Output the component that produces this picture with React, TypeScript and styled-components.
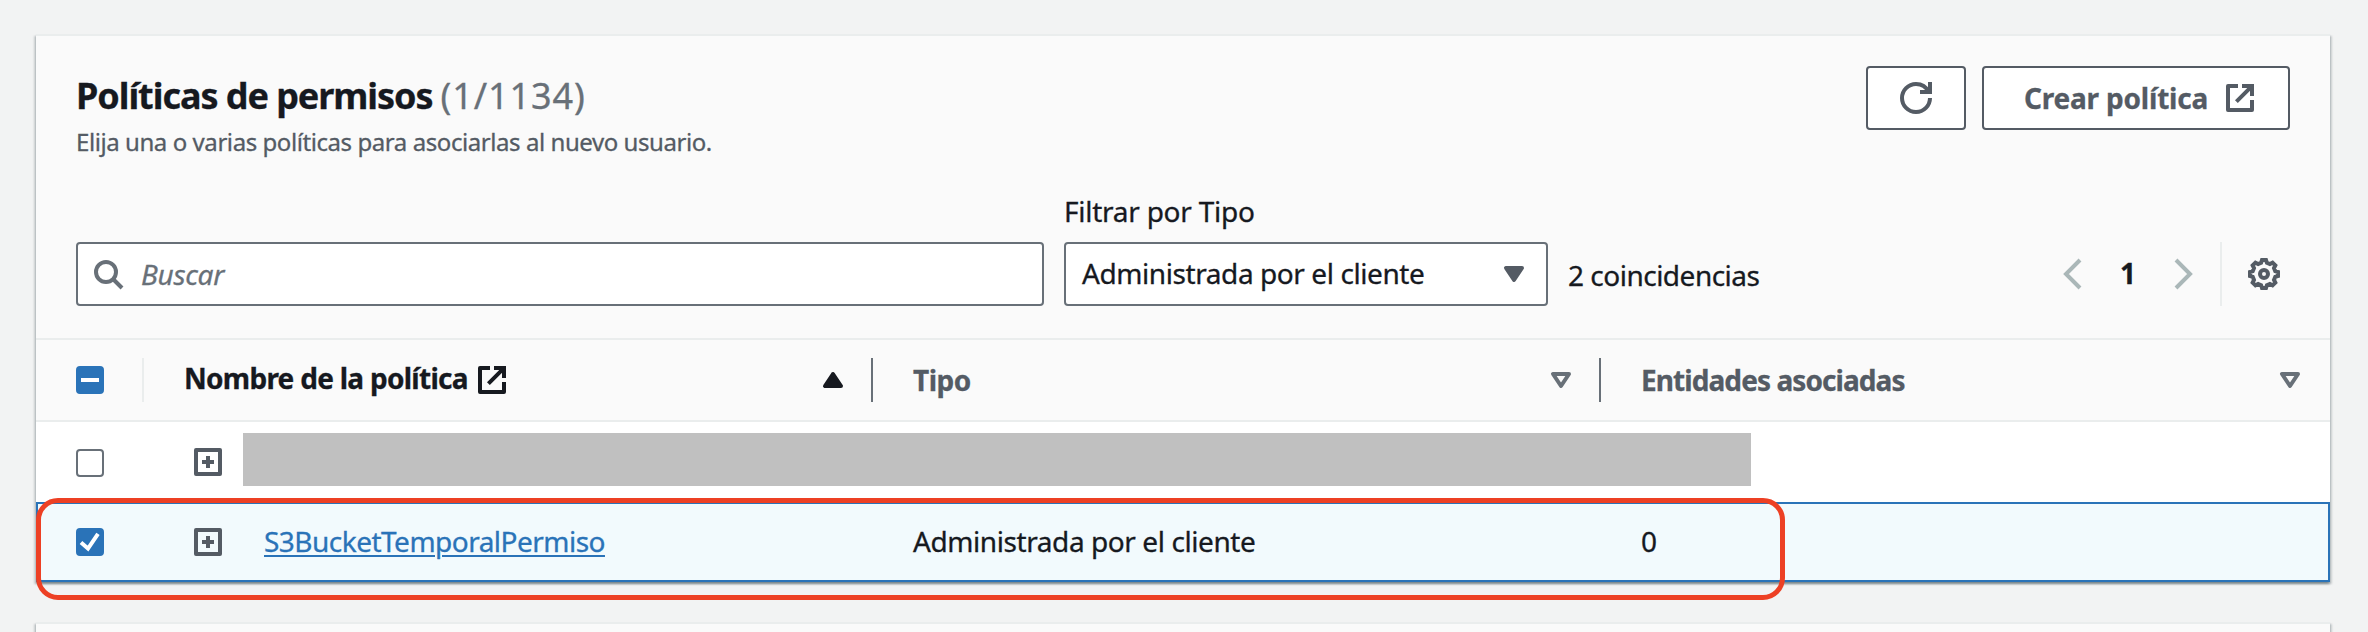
import React from 'react';
import styled, { createGlobalStyle } from 'styled-components';

const color = {
  page: '#f2f3f3',
  header: '#fafafa',
  line: '#eaeded',
  text: '#16191f',
  soft: '#545b64',
  border: '#687078',
  muted: '#aab7b8',
  blue: '#2a73b8',
  selected: '#f2fafd',
  red: '#ed4024',
};

const GlobalStyle = createGlobalStyle`
  * { box-sizing: border-box; }
  body {
    margin: 0;
    overflow: hidden;
    background: ${color.page};
    color: ${color.text};
    font: 28px/38px "Noto Sans", "Open Sans", sans-serif;
    -webkit-text-stroke: 0.3px currentColor;
  }
`;

const Page = styled.main`
  height: 632px;
  overflow: hidden;
  padding: 34px 38px 0 36px;
  display: flex;
  flex-direction: column;
  gap: 40px;
`;

const Panel = styled.section`
  position: relative;
  flex: none;
  border-top: 2px solid ${color.line};
  background: ${color.header};
  box-shadow:
    0 2px 2px 0 rgba(0, 28, 36, 0.3),
    2px 2px 2px 0 rgba(0, 28, 36, 0.15),
    -2px 2px 2px 0 rgba(0, 28, 36, 0.15);
`;

const NextPanel = styled(Panel)`
  height: 60px;
`;

const PanelHeader = styled.header`
  height: 302px;
  padding: 30px 40px 32px;
  display: flex;
  flex-direction: column;
  justify-content: space-between;
`;

const HeadingRow = styled.div`
  display: flex;
  justify-content: space-between;
  align-items: flex-start;
`;

const Heading = styled.div`
  padding-top: 8px;
`;

const Title = styled.h2`
  margin: 0 0 7px;
  display: flex;
  gap: 8px;
  font-size: 36px;
  line-height: 44px;
  letter-spacing: -1.06px;
  white-space: nowrap;
`;

const Counter = styled.span`
  font-weight: 400;
  letter-spacing: 0.9px;
  color: ${color.border};
`;

const Hint = styled.p`
  margin: 0;
  font-size: 24px;
  line-height: 33px;
  letter-spacing: -0.43px;
  color: ${color.soft};
  white-space: nowrap;
`;

const Actions = styled.div`
  display: flex;
  gap: 16px;
`;

const Button = styled.button<{ $width: number }>`
  width: ${(p) => p.$width}px;
  height: 64px;
  padding: 0 ${(p) => (p.$width > 100 ? '32px 0 40px' : '32px')};
  display: flex;
  align-items: center;
  justify-content: space-between;
  border: 2px solid ${color.soft};
  border-radius: 4px;
  background: #fff;
  color: ${color.soft};
  font: inherit;
  font-weight: 700;
`;

const Label = styled.span<{ $spacing?: number; $lift?: number }>`
  margin-bottom: ${(p) => p.$lift ?? 2}px;
  letter-spacing: ${(p) => p.$spacing ?? 0}px;
  white-space: nowrap;
`;

const Toolbar = styled.div`
  display: flex;
  align-items: flex-end;
`;

const Field = styled.div<{ $width: number }>`
  width: ${(p) => p.$width}px;
  height: 64px;
  padding: 0 16px 0 14px;
  display: flex;
  align-items: center;
  border: 2px solid ${color.border};
  border-radius: 4px;
  background: #fff;
`;

const SearchField = styled(Field)`
  gap: 17px;
  color: ${color.border};
  font-style: italic;
`;

const SelectField = styled(Field)`
  padding: 0 16px;
  justify-content: space-between;
`;

const Filter = styled.label`
  margin-left: 20px;
  display: flex;
  flex-direction: column;
`;

const FilterName = styled.span`
  margin: 0 0 13px;
  line-height: 36px;
  letter-spacing: -0.25px;
`;

const Matches = styled.span`
  margin-left: 20px;
  line-height: 64px;
  padding-top: 1px;
  height: 64px;
  letter-spacing: -0.5px;
`;

const Pagination = styled.nav`
  height: 64px;
  margin-left: auto;
  padding-right: 10px;
  display: flex;
  align-items: center;
`;

const PageNumber = styled.span`
  width: 76px;
  padding-bottom: 2px;
  text-align: center;
  font-weight: 700;
`;

const Separator = styled.span`
  width: 2px;
  height: 64px;
  margin: 0 26px 0 22px;
  background: ${color.line};
`;

const Row = styled.div`
  position: relative;
  height: 80px;
  display: grid;
  grid-template-columns: 108px 729px 728px 729px;
  background: #fff;
`;

const HeaderRow = styled(Row)`
  height: 84px;
  border-top: 2px solid ${color.line};
  border-bottom: 2px solid ${color.line};
  background: ${color.header};
  color: ${color.soft};
  font-weight: 700;
`;

const SelectedRow = styled(Row)`
  background: ${color.selected};
  box-shadow: inset 0 0 0 2px ${color.blue};
`;

const Cell = styled.div<{ $left?: number }>`
  padding-left: ${(p) => p.$left ?? 40}px;
  display: flex;
  align-items: center;
`;

const CheckCell = styled(Cell)`
  padding-left: 40px;
`;

const HeadCell = styled(Cell)<{ $tone?: string }>`
  padding-right: 24px;
  position: relative;
  gap: 8px;
  &::after {
    content: '';
    position: absolute;
    right: 0;
    top: 18px;
    width: 2px;
    height: 44px;
    background: ${(p) => p.$tone ?? 'transparent'};
  }
`;

const SortSlot = styled.span<{ $tone?: string }>`
  margin-left: auto;
  height: 32px;
  color: ${(p) => p.$tone ?? color.border};
`;

const NameHead = styled.span`
  display: flex;
  align-items: center;
  gap: 8px;
  color: ${color.text};
`;

const Checkbox = styled.span<{ $on?: boolean; $drop?: number }>`
  width: 28px;
  height: 28px;
  margin-top: ${(p) => p.$drop ?? 0}px;
  border-radius: 4px;
  border: 2px solid ${(p) => (p.$on ? color.blue : color.border)};
  background: ${(p) => (p.$on ? color.blue : '#fff')};
  display: flex;
  align-items: center;
  justify-content: center;
`;

const ExpandSlot = styled.span`
  height: 32px;
  color: ${color.soft};
`;

const PolicyLink = styled.a`
  margin: 0 0 2px 40px;
  letter-spacing: -0.52px;
  color: ${color.blue};
  text-decoration: underline;
  text-decoration-thickness: 2px;
  text-underline-offset: 3px;
`;

const Redaction = styled.div`
  position: absolute;
  left: 207px;
  top: 11px;
  width: 1508px;
  height: 53px;
  background: #c0c0c0;
`;

const Highlight = styled.div`
  position: absolute;
  left: 0;
  top: 462px;
  width: 1749px;
  height: 102px;
  border: 5px solid ${color.red};
  border-radius: 22px;
`;

const Svg = styled.svg`
  display: block;
  flex: none;
  width: 32px;
  height: 32px;
  fill: none;
  stroke: currentColor;
  stroke-width: 2;
`;

const MutedSvg = styled(Svg)`
  color: ${color.muted};
`;

const SoftSvg = styled(Svg)`
  color: ${color.soft};
`;

const TickSvg = styled.svg`
  display: block;
  flex: none;
  width: 28px;
  height: 28px;
  fill: none;
  stroke: #fff;
  stroke-width: 4;
`;

const ExternalIcon = () => (
  <Svg viewBox="0 0 16 16">
    <path d="M9 2h5v5M13.7 2.3 6.2 9.8" />
    <path d="M14 9v5H2V2h5" strokeLinejoin="round" />
  </Svg>
);

const CaretIcon = ({ up, filled }: { up?: boolean; filled?: boolean }) => (
  <Svg viewBox="0 0 16 16">
    <path
      d={up ? 'M4 11h8L8 5z' : 'M4 5h8l-4 6z'}
      fill={filled ? 'currentColor' : 'none'}
      strokeLinejoin="round"
    />
  </Svg>
);

const gearPoints = Array.from({ length: 8 }, (_, tooth) =>
  [
    [-14.5, 5.8],
    [-8, 7.1],
    [8, 7.1],
    [14.5, 5.8],
  ].map(([offset, radius]) => {
    const a = ((tooth * 45 + offset) * Math.PI) / 180;
    return `${(8 + radius * Math.sin(a)).toFixed(2)},${(8 - radius * Math.cos(a)).toFixed(2)}`;
  }),
)
  .flat()
  .join(' ');

const GearIcon = () => (
  <SoftSvg viewBox="0 0 16 16">
    <polygon points={gearPoints} />
    <circle cx="8" cy="8" r="2" />
  </SoftSvg>
);

const ExpandIcon = () => (
  <Svg viewBox="0 0 16 16">
    <rect x="2" y="2" width="12" height="12" strokeLinejoin="round" />
    <path d="M8 5v6M5 8h6" />
  </Svg>
);

export default function App() {
  return (
    <>
      <GlobalStyle />
      <Page>
        <Panel>
          <PanelHeader>
            <HeadingRow>
              <Heading>
                <Title>
                  Políticas de permisos <Counter>(1/1134)</Counter>
                </Title>
                <Hint>Elija una o varias políticas para asociarlas al nuevo usuario.</Hint>
              </Heading>
              <Actions>
                <Button $width={100} aria-label="Actualizar">
                  <Svg viewBox="0 0 16 16">
                    <path d="M15 0v5h-5" />
                    <path d="M15 8c0 3.87-3.13 7-7 7s-7-3.13-7-7 3.13-7 7-7c2.79 0 5.2 1.63 6.33 4" />
                  </Svg>
                </Button>
                <Button $width={308}>
                  <Label $spacing={-0.2} $lift={0}>Crear política</Label>
                  <ExternalIcon />
                </Button>
              </Actions>
            </HeadingRow>
            <Toolbar>
              <SearchField $width={968}>
                <Svg viewBox="0 0 16 16">
                  <circle cx="7" cy="7" r="5" />
                  <path d="m15 15-4.5-4.5" />
                </Svg>
                <Label $spacing={-0.3} $lift={0}>Buscar</Label>
              </SearchField>
              <Filter>
                <FilterName>Filtrar por Tipo</FilterName>
                <SelectField $width={484}>
                  <Label $spacing={-0.42}>Administrada por el cliente</Label>
                  <SortSlot $tone={color.soft}>
                    <CaretIcon filled />
                  </SortSlot>
                </SelectField>
              </Filter>
              <Matches>2 coincidencias</Matches>
              <Pagination>
                <MutedSvg viewBox="0 0 16 16">
                  <path d="M11 1 4 8l7 7" />
                </MutedSvg>
                <PageNumber>1</PageNumber>
                <MutedSvg viewBox="0 0 16 16">
                  <path d="m5 1 7 7-7 7" />
                </MutedSvg>
                <Separator />
                <GearIcon />
              </Pagination>
            </Toolbar>
          </PanelHeader>

          <HeaderRow>
            <HeadCell $tone={color.line}>
              <Checkbox $on>
                <TickSvg viewBox="0 0 28 28">
                  <path d="M5 14h18" />
                </TickSvg>
              </Checkbox>
            </HeadCell>
            <HeadCell $tone={color.border}>
              <NameHead>
                <Label $spacing={-0.72} $lift={4}>Nombre de la política</Label>
                <ExternalIcon />
              </NameHead>
              <SortSlot $tone={color.text}>
                <CaretIcon up filled />
              </SortSlot>
            </HeadCell>
            <HeadCell $tone={color.border}>
              <Label $spacing={-0.5} $lift={1}>Tipo</Label>
              <SortSlot>
                <CaretIcon />
              </SortSlot>
            </HeadCell>
            <HeadCell>
              <Label $spacing={-0.92} $lift={1}>Entidades asociadas</Label>
              <SortSlot>
                <CaretIcon />
              </SortSlot>
            </HeadCell>
          </HeaderRow>

          <Row>
            <CheckCell>
              <Checkbox $drop={2} />
            </CheckCell>
            <Cell $left={48}>
              <ExpandSlot>
                <ExpandIcon />
              </ExpandSlot>
            </Cell>
            <Redaction />
          </Row>

          <SelectedRow>
            <CheckCell>
              <Checkbox $on>
                <TickSvg viewBox="0 0 28 28">
                  <path d="m5 14.5 7 6L22 5.8" />
                </TickSvg>
              </Checkbox>
            </CheckCell>
            <Cell $left={48}>
              <ExpandSlot>
                <ExpandIcon />
              </ExpandSlot>
              <PolicyLink>S3BucketTemporalPermiso</PolicyLink>
            </Cell>
            <Cell>
              <Label $spacing={-0.42}>Administrada por el cliente</Label>
            </Cell>
            <Cell>
              <Label>0</Label>
            </Cell>
          </SelectedRow>
          <Highlight />
        </Panel>
        <NextPanel />
      </Page>
    </>
  );
}
